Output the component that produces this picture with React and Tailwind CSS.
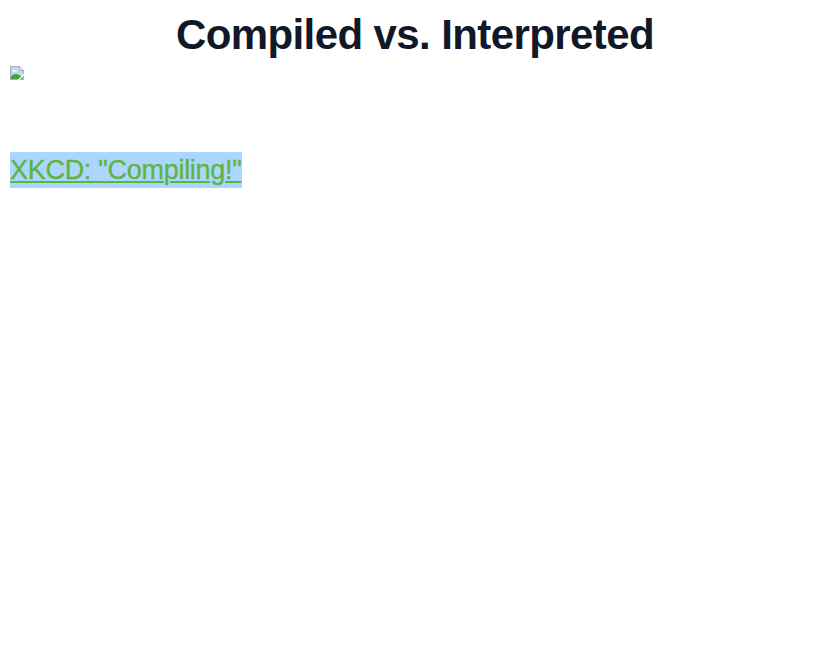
export default function App() {
  return (
    <main className="flex h-[650px] w-full flex-col items-start overflow-hidden bg-white px-[10px] pt-[10px] font-['Liberation_Sans',Arial,sans-serif]">
      <h1 className="w-full pr-[2px] text-center text-[42px] leading-[50px] font-bold tracking-[-0.6px] whitespace-nowrap text-[#111928]">
        Compiled vs. Interpreted
      </h1>
      <svg className="mt-[6px] block" width="14" height="14" viewBox="0 0 14 14" aria-hidden="true">
        <path d="M0.5 0.5H9.5L13.5 4.5V13.5H0.5Z" fill="#c3d5f3" stroke="#a9adb1" />
        <path d="M2.5 5.5C2.5 4 4 3.3 5 4C6.3 3.7 7 4.7 7 5.5Z" fill="#fff" />
        <path d="M1 13V10.5C3 8 6 7.5 8 8.5C10 9.3 12 11 13 13Z" fill="#3fa535" />
        <path d="M9.5 0.5V4.5H13.5Z" fill="#fff" stroke="#a9adb1" />
        <path d="M14 7.5V9L9.5 14H7.8Z" fill="#fff" />
      </svg>
      <a
        href="#"
        className="mt-[72px] block w-[232px] bg-[#acd5ff] text-[27px] leading-[36px] tracking-[-0.29px] whitespace-nowrap text-[#5cb53c] underline decoration-2 underline-offset-[2px] [-webkit-text-stroke:0.3px_#5cb53c]"
      >
        XKCD: "Compiling!"
      </a>
    </main>
  );
}
